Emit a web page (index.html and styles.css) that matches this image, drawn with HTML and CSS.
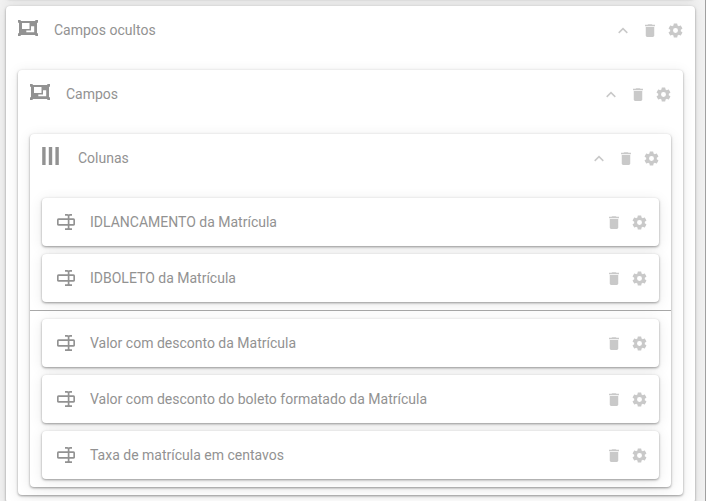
FILE: index.html
```
<!DOCTYPE html>
<html lang="pt-BR">
<head>
  <meta charset="UTF-8">
  <title>Campos ocultos</title>
  <link rel="stylesheet" href="styles.css">
</head>

<body>
  <!-- shared icons -->
  <svg class="sprite">
    <symbol id="group" viewBox="0 0 20 16">
      <path d="M1 1h18v14H1z"/>
      <path d="M0 0h2.700v2.700H0zM17.300 0H20v2.700h-2.700zM0 13.300h2.700V16H0zM17.300 13.300H20V16h-2.700z"/>
      <path fill="#fff" d="M4 3h7.500v6H4zM13 6.300h3.200v6H8.300v-1.800H13z"/>
    </symbol>
    <symbol id="columns" viewBox="0 0 18 18">
      <path d="M.2 0h3.400v18H.2zM6.800 0h3.400v18H6.800zM13.400 0h3.400v18h-3.400z"/>
    </symbol>
    <symbol id="field" viewBox="0 0 18 16">
      <path fill="none" stroke="currentColor" stroke-width="1.700" d="M11.500 5.200H1.800a1 1 0 0 0-1 1v3.700a1 1 0 0 0 1 1h14.400a1 1 0 0 0 1-1V6.200a1 1 0 0 0-1-1zM8 .9h2.200q1.400 0 1.400 1v12.200q0 1-1.400 1H8M15 .9h-2q-1.400 0-1.400 1v12.200q0 1 1.400 1h2"/>
    </symbol>
    <symbol id="up" viewBox="0 0 18 18">
      <path fill="none" stroke="currentColor" stroke-width="1.500" d="M4.700 11.900L9 7.600l4.300 4.300"/>
    </symbol>
    <symbol id="trash" viewBox="0 0 24 24">
      <path d="M6 19c0 1.100.9 2 2 2h8c1.100 0 2-.9 2-2V7H6v12zM19 4h-3.500l-1-1h-5l-1 1H5v2h14V4z"/>
    </symbol>
    <symbol id="gear" viewBox="0 0 24 24">
      <path d="M12 15.500A3.500 3.500 0 0 1 8.500 12 3.500 3.500 0 0 1 12 8.500a3.500 3.500 0 0 1 3.500 3.500 3.500 3.500 0 0 1-3.500 3.500m7.430-2.530c.04-.32.07-.64.07-.97s-.03-.66-.07-1l2.110-1.630c.19-.15.24-.42.12-.64l-2-3.460c-.12-.22-.39-.31-.61-.22l-2.490 1c-.52-.39-1.060-.73-1.690-.98l-.37-2.650A.506.506 0 0 0 14 2h-4c-.25 0-.46.18-.5.42l-.37 2.650c-.63.25-1.170.59-1.690.98l-2.490-1c-.22-.09-.49 0-.61.22l-2 3.460c-.13.22-.07.49.12.64L4.570 11c-.04.34-.07.67-.07 1s.03.65.07.97l-2.110 1.660c-.19.15-.25.42-.12.64l2 3.460c.12.22.39.3.61.22l2.490-1.010c.52.4 1.060.74 1.690.99l.37 2.650c.04.24.25.42.5.42h4c.25 0 .46-.18.5-.42l.37-2.650c.63-.26 1.170-.59 1.690-.99l2.490 1.010c.22.08.49 0 .61-.22l2-3.460c.12-.22.07-.49-.12-.64z"/>
    </symbol>
  </svg>

  <div class="previous"></div>

  <div class="card">
    <div class="head">
      <svg class="icon group"><use href="#group"/></svg>
      <span class="title">Campos ocultos</span>
      <svg class="action up"><use href="#up"/></svg>
      <svg class="action trash"><use href="#trash"/></svg>
      <svg class="action gear"><use href="#gear"/></svg>
    </div>

    <div class="card">
      <div class="head">
        <svg class="icon group"><use href="#group"/></svg>
        <span class="title">Campos</span>
        <svg class="action up"><use href="#up"/></svg>
        <svg class="action trash"><use href="#trash"/></svg>
        <svg class="action gear"><use href="#gear"/></svg>
      </div>

      <div class="card">
        <div class="head">
          <svg class="icon columns"><use href="#columns"/></svg>
          <span class="title">Colunas</span>
          <svg class="action up"><use href="#up"/></svg>
          <svg class="action trash"><use href="#trash"/></svg>
          <svg class="action gear"><use href="#gear"/></svg>
        </div>

        <div class="column">
          <div class="item">
            <svg class="icon field"><use href="#field"/></svg>
            <span class="title">IDLANCAMENTO da Matrícula</span>
            <svg class="action trash"><use href="#trash"/></svg>
            <svg class="action gear"><use href="#gear"/></svg>
          </div>
          <div class="item">
            <svg class="icon field"><use href="#field"/></svg>
            <span class="title">IDBOLETO da Matrícula</span>
            <svg class="action trash"><use href="#trash"/></svg>
            <svg class="action gear"><use href="#gear"/></svg>
          </div>
        </div>

        <div class="column">
          <div class="item">
            <svg class="icon field"><use href="#field"/></svg>
            <span class="title">Valor com desconto da Matrícula</span>
            <svg class="action trash"><use href="#trash"/></svg>
            <svg class="action gear"><use href="#gear"/></svg>
          </div>
          <div class="item">
            <svg class="icon field"><use href="#field"/></svg>
            <span class="title">Valor com desconto do boleto formatado da Matrícula</span>
            <svg class="action trash"><use href="#trash"/></svg>
            <svg class="action gear"><use href="#gear"/></svg>
          </div>
          <div class="item">
            <svg class="icon field"><use href="#field"/></svg>
            <span class="title">Taxa de matrícula em centavos</span>
            <svg class="action trash"><use href="#trash"/></svg>
            <svg class="action gear"><use href="#gear"/></svg>
          </div>
        </div>
      </div>
    </div>
  </div>
</body>
</html>
```
FILE: styles.css
```
* {
  box-sizing: border-box;
}

body {
  margin: 0;
  height: 501px;
  padding: 0 10px 0 6px;
  overflow: hidden;
  background-color: #f2f2f2;
  border-right: 1px solid #a0a0a0;
  color: #929292;
  font-family: Roboto, sans-serif;
  font-size: 14px;
}

.sprite {
  display: none;
}

svg {
  fill: currentColor;
  flex: none;
}

.card, .item, .previous {
  background-color: #fff;
  border-radius: 4px;
  box-shadow: 0 1px 3px rgba(0, 0, 0, .28),
              0 1px 2px rgba(0, 0, 0, .14),
              0 2px 14px rgba(0, 0, 0, .09);
}

/* end of the card above */
.previous {
  height: 8px;
  margin-top: -10px;
  margin-bottom: 8px;
}

.card {
  padding-bottom: 8px;
}

.card .card {
  margin: 0 12px;
}

.head, .item {
  display: flex;
  align-items: center;
  height: 48px;
  padding-right: 11px;
}

.head {
  margin-bottom: 16px;
}

.title {
  flex: 1;
  line-height: 20px;
}

.icon.group {
  width: 20px;
  height: 16px;
  margin: 0 16px 4px 12px;
}

.icon.columns {
  width: 18px;
  height: 18px;
  margin: 0 18px 4px 12px;
}

.icon.field {
  width: 18px;
  height: 16px;
  margin: 0 15px;
}

.action {
  width: 18px;
  height: 18px;
  color: #c9c9c9;
}

.action.up {
  margin-right: 9px;
}

.action.trash {
  height: 17px;
  margin-top: 1px;
}

.action.gear {
  width: 17px;
  height: 17px;
  margin-left: 8px;
  margin-top: 1px;
}

.column {
  display: flex;
  flex-direction: column;
  gap: 8px;
  padding: 0 12px;
}

.column + .column {
  margin-top: 8px;
  padding-top: 8px;
  border-top: 1px solid #a8a8a8;
}
```
